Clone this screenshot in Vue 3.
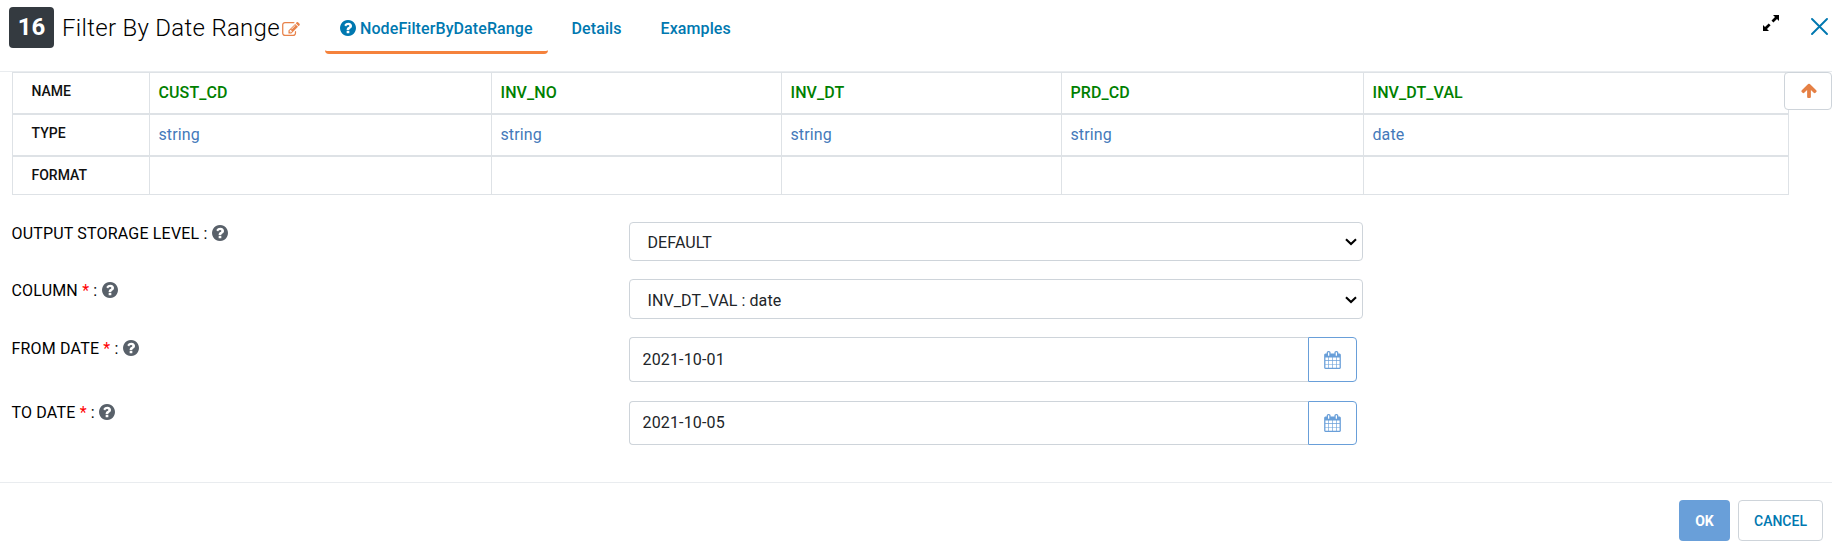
<script setup>
import { ref } from 'vue'

const tabs = ['NodeFilterByDateRange', 'Details', 'Examples']
const active = ref(0)
const columns = [
  { name: 'CUST_CD', type: 'string' },
  { name: 'INV_NO', type: 'string' },
  { name: 'INV_DT', type: 'string' },
  { name: 'PRD_CD', type: 'string' },
  { name: 'INV_DT_VAL', type: 'date' },
]
const fields = ref([
  { key: 'storage', label: 'OUTPUT STORAGE LEVEL', kind: 'select', value: 'DEFAULT' },
  { key: 'column', label: 'COLUMN', required: true, kind: 'select', value: 'INV_DT_VAL : date' },
  { key: 'from', label: 'FROM DATE', required: true, kind: 'date', value: '2021-10-01' },
  { key: 'to', label: 'TO DATE', required: true, kind: 'date', value: '2021-10-05' },
])
const helpPath = 'M1024 1376v-192q0-14-9-23t-23-9h-192q-14 0-23 9t-9 23v192q0 14 9 23t23 9h192q14 0 23-9t9-23zM1280 704q0-88-55.5-163t-138.5-116-170-41q-243 0-371 213-15 24 8 42l132 100q7 6 19 6 16 0 25-12 53-68 86-92 34-24 86-24 48 0 85.5 26t37.5 59q0 38-20 61t-68 45q-63 28-115.5 86.5t-52.5 125.5v36q0 14 9 23t23 9h192q14 0 23-9t9-23q0-19 21.5-49.5t54.5-49.5q32-18 49-28.5t46-35 44.5-48 28-60.5 12.5-81zM1664 896q0 209-103 385.5t-279.5 279.5-385.5 103-385.5-103-279.5-279.5-103-385.5 103-385.5 279.5-279.5 385.5-103 385.5 103 279.5 279.5 103 385.5z'
</script>

<template>
  <div class="dialog">
    <header class="head">
      <span class="badge">16</span>
      <h1 class="title">Filter By Date Range</h1>
      <svg class="edit" viewBox="0 128 1792 1408"><path d="M888 1184l116-116-152-152-116 116v56h96v96h56zM1328 464q-16-16-33 1l-350 350q-17 17-1 33t33-1l350-350q17-17 1-33zM1408 1058v190q0 119-84.5 203.5t-203.5 84.5h-832q-119 0-203.5-84.5t-84.5-203.5v-832q0-119 84.5-203.5t203.5-84.5h832q63 0 117 25 15 7 18 23 3 17-9 29l-49 49q-14 14-32 8-23-6-45-6h-832q-66 0-113 47t-47 113v832q0 66 47 113t113 47h832q66 0 113-47t47-113v-126q0-13 9-22l64-64q15-15 35-7t20 29zM1312 320l288 288-672 672h-288v-288zM1756 452l-92 92-288-288 92-92q28-28 68-28t68 28l152 152q28 28 28 68t-28 68z" /></svg>
      <nav class="tabs">
        <a v-for="(t, i) in tabs" :key="t" class="tab" :class="{ on: i === active }" @click="active = i">
          <svg v-if="i === 0" class="help" viewBox="128 128 1536 1536"><path :d="helpPath" /></svg><span>{{ t }}</span>
        </a>
      </nav>
      <svg class="expand" viewBox="0 0 16 16"><path d="M10 0h6v6l-2-2-3.6 3.4-1.9-1.9L12 2zM5.7 8.4l1.9 1.9L4 14l2 2H0v-6l2 2z" /></svg>
      <svg class="close" viewBox="0 0 17 17"><path d="M1 1l15 15M16 1L1 16" /></svg>
    </header>

    <main class="body">
      <div class="schema">
        <div class="row">
          <b class="key">NAME</b>
          <span v-for="c in columns" :key="c.name" class="cell name">{{ c.name }}</span>
        </div>
        <div class="row">
          <b class="key">TYPE</b>
          <span v-for="c in columns" :key="c.name" class="cell type">{{ c.type }}</span>
        </div>
        <div class="row last">
          <b class="key">FORMAT</b>
          <span v-for="c in columns" :key="c.name" class="cell"></span>
        </div>
      </div>
      <button class="up"><svg viewBox="117 128 1558 1536"><path d="M1675 971q0 51-37 90l-75 75q-38 38-91 38-54 0-90-38l-294-293v704q0 52-37.5 84.5t-90.5 32.5h-128q-53 0-90.5-32.5t-37.5-84.5v-704l-294 293q-36 38-90 38t-90-38l-75-75q-38-38-38-90 0-53 38-91l651-651q35-37 90-37 54 0 91 37l651 651q37 39 37 91z" /></svg></button>

      <div class="form">
        <div v-for="f in fields" :key="f.key" class="field" :class="f.key">
          <label class="label">
            <span>{{ f.label }}<template v-if="f.required">&nbsp;<i>*</i></template>&nbsp;:</span>
            <svg class="help" viewBox="128 128 1536 1536"><path :d="helpPath" /></svg>
          </label>
          <div v-if="f.kind === 'select'" class="picker">
            <select v-model="f.value" class="select"><option>{{ f.value }}</option></select>
            <svg class="chevron" viewBox="0 0 12 8"><path d="M1 1.3l5 4.7 5-4.7" /></svg>
          </div>
          <div v-else class="date">
            <input v-model="f.value" type="text" />
            <button><svg viewBox="64 0 1664 1792"><path d="M192 1664h288v-288h-288v288zM544 1664h320v-288h-320v288zM192 1312h288v-320h-288v320zM544 1312h320v-320h-320v320zM192 928h288v-288h-288v288zM928 1664h320v-288h-320v288zM544 928h320v-288h-320v288zM1312 1664h288v-288h-288v288zM928 1312h320v-320h-320v320zM576 448v-288q0-13-9.5-22.5t-22.5-9.5h-64q-13 0-22.5 9.5t-9.5 22.5v288q0 13 9.5 22.5t22.5 9.5h64q13 0 22.5-9.5t9.5-22.5zM1312 1312h288v-320h-288v320zM928 928h320v-288h-320v288zM1312 928h288v-288h-288v288zM1344 448v-288q0-13-9.5-22.5t-22.5-9.5h-64q-13 0-22.5 9.5t-9.5 22.5v288q0 13 9.5 22.5t22.5 9.5h64q13 0 22.5-9.5t9.5-22.5zM1728 384v1280q0 52-38 90t-90 38h-1408q-52 0-90-38t-38-90v-1280q0-52 38-90t90-38h128v-96q0-66 47-113t113-47h64q66 0 113 47t47 113v96h384v-96q0-66 47-113t113-47h64q66 0 113 47t47 113v96h128q52 0 90 38t38 90z" /></svg></button>
          </div>
        </div>
      </div>
    </main>

    <footer class="foot">
      <button class="ok">OK</button>
      <button class="cancel">CANCEL</button>
    </footer>
  </div>
</template>

<style>
body { margin: 0; background: #fff; overflow: hidden; }
</style>

<style scoped>
* { box-sizing: border-box; }
.dialog { width: 1832px; height: 551px; display: flex; flex-direction: column; font-family: Roboto, sans-serif; font-size: 16px; color: #212529; background: #fff; }
svg { display: block; flex: none; fill: currentColor; }
button { font: inherit; padding: 0; display: flex; align-items: center; justify-content: center; background: #fff; }
.head { height: 72px; display: flex; align-items: flex-start; padding: 7px 4px 0 9px; border-bottom: 1px solid #e9ecef; }
.badge { width: 45px; height: 41px; border-radius: 4px; background: #343a40; color: #fff; font: 700 24px/41px Roboto, sans-serif; text-align: center; }
.title { margin: 0 0 0 8px; width: 220px; font-size: 24px; font-weight: 300; color: #000; letter-spacing: .3px; line-height: 42px; white-space: nowrap; }
.edit { width: 18px; height: 14px; margin: 15px 0 0 0; color: #e8824a; }
.tabs { display: flex; margin-left: 25px; }
.tab { height: 47px; padding: 0 15px 2px; margin-right: 9px; display: flex; align-items: center; gap: 4px; border-bottom: 3px solid transparent; border-radius: 4px; color: #0078b0; font-weight: 500; letter-spacing: .09px; }
.tab.on { border-bottom-color: #f5823c; }
.help { width: 16px; height: 16px; }
.expand { width: 16px; height: 16px; margin: 8px 0 0 auto; color: #000; }
.close { width: 17px; height: 17px; margin: 11px 0 0 32px; fill: none; stroke: #0078b0; stroke-width: 1.9; stroke-linecap: round; }
.body { position: relative; flex: 1; }
.schema { margin-left: 12px; width: 1777px; border: 1px solid #dee2e6; border-bottom: 0; }
.row { display: grid; grid-template-columns: 136px 342px 290px 280px 302px 1fr; height: 42px; border-bottom: 2px solid #dee2e6; }
.row.last { height: 38px; border-bottom-width: 1px; }
.key { padding: 9px 0 0 18.5px; font-size: 14px; line-height: 18px; font-weight: 500; color: #111; }
.cell { border-left: 1px solid #dee2e6; padding: 10px 0 0 8.5px; line-height: 20px; letter-spacing: .1px; }
.name { color: #008000; font-weight: 500; }
.type { color: #4479ba; }
.up { position: absolute; top: 0; right: 0; width: 48px; height: 38px; border: 1px solid #ced4da; border-radius: 4px; color: #e58045; padding: 0 0 2px 1px; }
.up svg { width: 16px; height: 15px; }
.form { padding: 27px 0 0 11.5px; }
.field { display: flex; align-items: flex-start; }
.label { width: 617.5px; display: flex; gap: 4.5px; color: #000; line-height: 24px; letter-spacing: .18px; }
.label i { color: #f00; font-style: normal; font-weight: 400; }
.label .help { color: #59616a; margin-top: 3px; }
.storage { height: 57px; }
.column { height: 58px; }
.from { height: 64px; }
.picker { position: relative; width: 734px; height: 39px; display: flex; }
.column .picker { height: 40px; }
.select { appearance: none; width: 100%; border: 1px solid #ced4da; border-radius: 4px; background: #fff; color: #212529; font: inherit; letter-spacing: .1px; padding: 1px 0 0 17.5px; outline: 0; }
.column .select { padding-top: 2px; }
.chevron { position: absolute; right: 6px; top: 16px; width: 12px; height: 8px; fill: none; stroke: #000; stroke-width: 2.1; pointer-events: none; }
.column .chevron { top: 17px; }
.date { display: flex; width: 728px; height: 45px; }
.to .date { height: 44px; }
.date input { width: 680px; border: 1px solid #ced4da; border-right: 0; border-radius: 4px 0 0 4px; padding: 0 12px 1px 12.5px; font: inherit; letter-spacing: .15px; color: #212529; outline: 0; }
.date button { width: 49px; border: 1px solid #699fd9; border-radius: 0 4px 4px 0; color: #699fd9; }
.date svg { width: 17px; height: 18px; }
.foot { height: 69px; border-top: 1px solid #e9ecef; display: flex; justify-content: flex-end; gap: 8px; padding: 17px 9px 0 0; font-size: 14px; font-weight: 500; }
.foot button { height: 41px; border-radius: 4px; }
.foot .ok { width: 51px; border: 0; background: #699fd9; color: #fff; font-weight: 700; }
.foot .cancel { width: 85px; border: 1px solid #ced4da; color: #0078b0; }
</style>
